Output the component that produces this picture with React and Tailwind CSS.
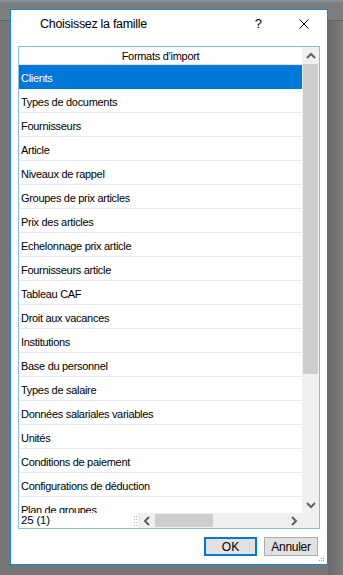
const rows = [
  'Clients',
  'Types de documents',
  'Fournisseurs',
  'Article',
  'Niveaux de rappel',
  'Groupes de prix articles',
  'Prix des articles',
  'Echelonnage prix article',
  'Fournisseurs article',
  'Tableau CAF',
  'Droit aux vacances',
  'Institutions',
  'Base du personnel',
  'Types de salaire',
  'Données salariales variables',
  'Unités',
  'Conditions de paiement',
  'Configurations de déduction',
  'Plan de groupes',
]

const Chevron = ({ dir }) => {
  const d = {
    up: 'M1 6 L5 2 L9 6',
    down: 'M1 2 L5 6 L9 2',
    left: 'M6 1 L2 5 L6 9',
    right: 'M2 1 L6 5 L2 9',
  }[dir]
  const vert = dir === 'up' || dir === 'down'
  return (
    <svg width={vert ? 10 : 8} height={vert ? 8 : 10} viewBox={vert ? '0 0 10 8' : '0 0 8 10'}>
      <path d={d} fill="none" stroke="#606060" strokeWidth="2" />
    </svg>
  )
}

export default function App() {
  return (
    <div
      className="relative w-[343px] h-[575px] overflow-hidden bg-[#767676] pt-[9px] pl-[10px]"
      style={{ fontFamily: '"Liberation Sans", Arial, sans-serif' }}
    >
      {/* window behind */}
      <div className="absolute left-0 top-0 w-full h-[21px] bg-[#7e7e7e] border-t-2 border-t-[#8a9196] border-b border-b-[#56646b]" />
      <div className="absolute right-0 top-[21px] w-[15px] h-full bg-gradient-to-r from-[#6a6a6a] to-[#7c7c7c]" />

      {/* dialog */}
      <div className="relative w-[318px] h-[556px] bg-white border border-[#1883d7] flex flex-col text-black">
        {/* title bar */}
        <div className="h-[28px] mb-[8px] flex items-center shrink-0">
          <span className="ml-[29px] text-[12.5px] tracking-[-0.3px]">Choisissez la famille</span>
          <span className="ml-auto mr-[37px] text-[13px]">?</span>
          <svg width="10" height="10" viewBox="0 0 10 10" className="mr-[18px]">
            <path d="M0.5 0.5 L9.5 9.5 M9.5 0.5 L0.5 9.5" stroke="#000" strokeWidth="1" />
          </svg>
        </div>

        {/* list box */}
        <div className="ml-[7px] w-[302px] h-[483px] border border-[#86c0e0] flex flex-col shrink-0">
          <div className="flex h-[466px]">
            {/* list */}
            <div className="w-[283px] flex flex-col overflow-hidden">
              <div className="h-[18px] shrink-0 flex items-center justify-center pt-px text-[11px] tracking-[-0.3px] border-b border-[#e5e5e5]">
                Formats d’import
              </div>
              {rows.map((r, i) => (
                <div
                  key={r}
                  className={`h-[24px] shrink-0 flex items-center pl-[2px] pt-[3px] text-[11px] tracking-[-0.3px] border-b ${
                    i === 0 ? 'bg-[#0078d7] text-white border-[#0078d7]' : 'border-[#e2eaf6]'
                  }`}
                >
                  {r}
                </div>
              ))}
            </div>
            {/* vertical scrollbar */}
            <div className="w-[17px] bg-[#f0f0f0] flex flex-col">
              <div className="h-[17px] flex items-center justify-center">
                <Chevron dir="up" />
              </div>
              <div className="mx-px h-[310px] bg-[#cdcdcd]" />
              <div className="mt-auto h-[17px] flex items-center justify-center">
                <Chevron dir="down" />
              </div>
            </div>
          </div>

          {/* bottom bar */}
          <div className="flex h-[15px]">
            <div className="w-[114px] flex items-center pl-[2px] pt-px text-[11.5px] tracking-[-0.2px] bg-white">25 (1)</div>
            <div className="w-[5px] flex flex-col justify-center gap-[2px] items-center bg-white">
              {[0, 1, 2, 3].map(i => (
                <div key={i} className="flex gap-[1px]">
                  <div className="w-px h-px bg-[#b0b0b0]" />
                  <div className="w-px h-px bg-[#b0b0b0]" />
                </div>
              ))}
            </div>
            <div className="w-[164px] bg-[#f0f0f0] flex items-center">
              <div className="w-[17px] flex justify-center">
                <Chevron dir="left" />
              </div>
              <div className="w-[58px] h-[13px] bg-[#cdcdcd]" />
              <div className="ml-auto w-[17px] flex justify-center">
                <Chevron dir="right" />
              </div>
            </div>
            <div className="w-[17px] bg-[#f0f0f0]" />
          </div>
        </div>

        {/* buttons */}
        <div className="flex justify-end gap-[7px] mt-[8px] mr-[9px]">
          <button className="w-[53px] h-[19px] bg-[#e1e1e1] border-2 border-[#0078d7] text-[12px] leading-none">
            OK
          </button>
          <button className="w-[54px] h-[19px] bg-[#e1e1e1] border border-[#adadad] text-[12px] tracking-[-0.3px] leading-none">
            Annuler
          </button>
        </div>

        {/* resize grip */}
        <svg width="6" height="6" viewBox="0 0 6 6" className="absolute right-[2px] bottom-[2px]">
          <rect x="4" y="0" width="1" height="1" fill="#9a9a9a" />
          <rect x="2" y="2" width="1" height="1" fill="#9a9a9a" />
          <rect x="4" y="2" width="1" height="1" fill="#9a9a9a" />
          <rect x="0" y="4" width="1" height="1" fill="#9a9a9a" />
          <rect x="2" y="4" width="1" height="1" fill="#9a9a9a" />
          <rect x="4" y="4" width="1" height="1" fill="#9a9a9a" />
        </svg>
      </div>
    </div>
  )
}
